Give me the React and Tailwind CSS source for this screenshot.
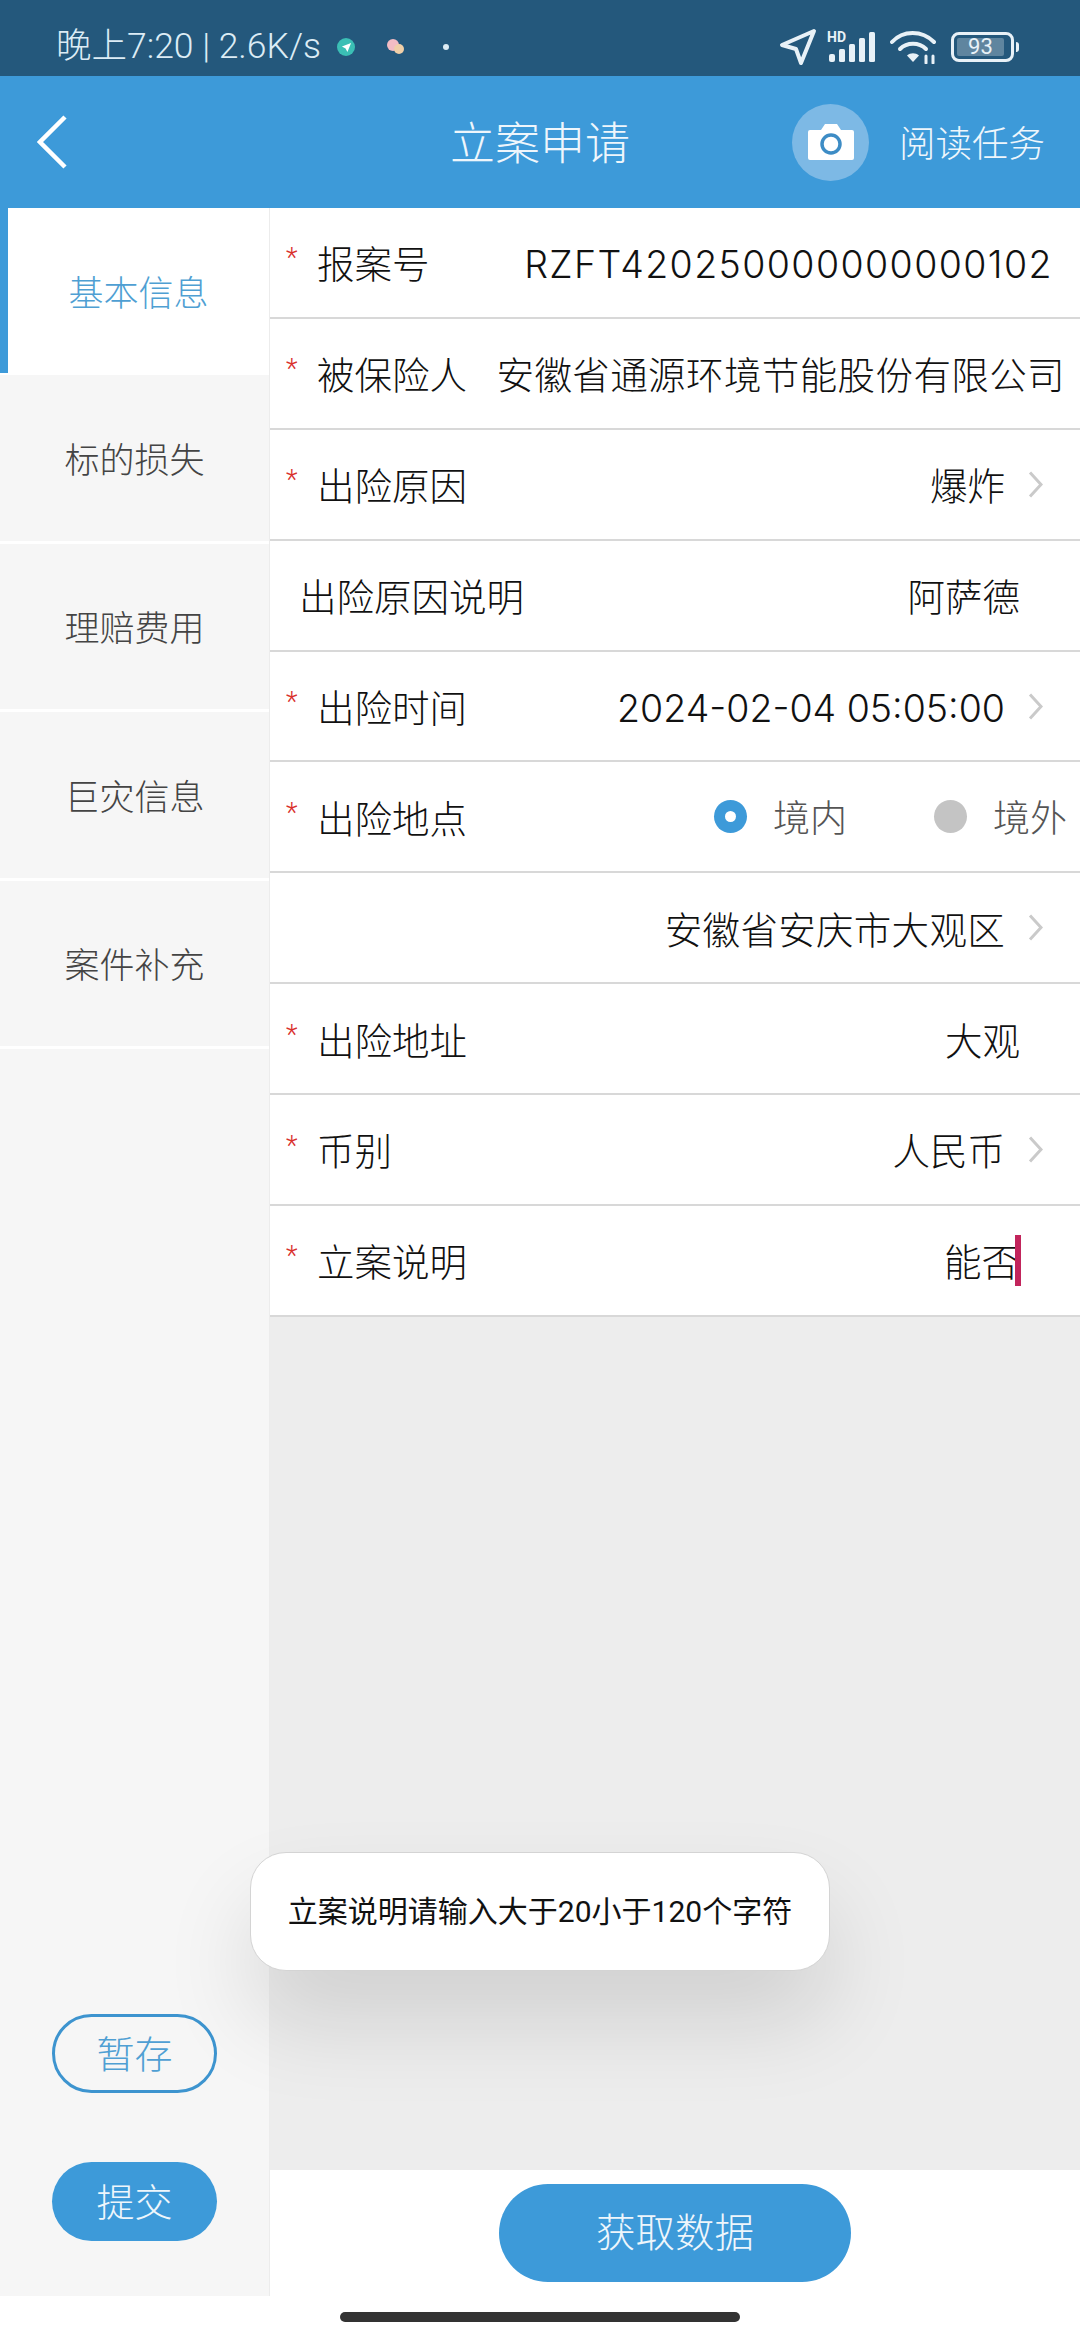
import React from 'react';

const fontStack = "font-['Roboto','Noto_Sans_CJK_SC',sans-serif]";

const tabs = ['标的损失', '理赔费用', '巨灾信息', '案件补充'];

const Arrow = () => (
  <svg className="ml-[23px] mr-[22px] shrink-0" width="15" height="27" viewBox="0 0 15 27" fill="none" stroke="#cacaca" strokeWidth="3">
    <path d="M2 1.5 13 13.5 2 25.5" />
  </svg>
);

const Row = ({ label, required = true, value, arrow, caret, textClass = '', children, valueClass = '' }) => (
  <div className="h-[110.9px] flex items-center border-b-2 border-[#d8d8d8] bg-white pr-[15px] shrink-0">
    {required ? (
      <span className="w-[47px] pl-[16px] text-[#d9302c] text-[27px] font-light leading-none -mt-[7px]">*</span>
    ) : (
      <span className="w-[29px]" />
    )}
    <span className="pt-[6px] text-[37.5px] font-light text-[#111] whitespace-nowrap">{label}</span>
    <div className={`flex-1 flex items-center justify-end ${valueClass}`}>
      {children || (
        <span className={`pt-[6px] text-[37.5px] font-light text-[#111] whitespace-nowrap ${textClass}`}>{value}</span>
      )}
      {caret && <span className="w-[6px] h-[51px] bg-[#c2255c] -ml-[4px]" />}
      {arrow && <Arrow />}
    </div>
  </div>
);

const Radio = ({ checked, label }) => (
  <div className="flex items-center gap-[26px]">
    {checked ? (
      <span className="w-[33px] h-[33px] rounded-full bg-[#3d9ad9] flex items-center justify-center">
        <span className="w-[11px] h-[11px] rounded-full bg-white" />
      </span>
    ) : (
      <span className="w-[33px] h-[33px] rounded-full bg-[#c4c4c4]" />
    )}
    <span className="pt-[6px] text-[37px] font-light text-[#555]">{label}</span>
  </div>
);

export default function App() {
  return (
    <div className={`w-[1080px] h-[2340px] bg-white flex flex-col relative overflow-hidden ${fontStack}`}>
      {/* Status bar */}
      <div className="h-[76px] bg-[#24587c] flex items-center pt-[18px] pl-[56px] pr-[61px] text-[#dcecf5] shrink-0">
        <span className="text-[35.5px] font-light whitespace-nowrap">晚上7:20 | 2.6K/s</span>
        <span className="ml-[16px] w-[18px] h-[18px] rounded-full bg-[#3bbfb5] flex items-center justify-center">
          <svg width="11" height="11" viewBox="0 0 12 12"><path d="M11 1 1 5l4 2 2 4z" fill="#fff" /></svg>
        </span>
        <svg className="ml-[31px]" width="20" height="16" viewBox="0 0 20 16">
          <circle cx="7" cy="6" r="6" fill="#f3bcc4" />
          <circle cx="13" cy="10" r="5" fill="#f0cfa8" />
        </svg>
        <span className="ml-[37px] w-[6px] h-[6px] rounded-full bg-[#dcecf5]" />
        <div className="ml-auto flex items-center">
          <svg width="38" height="38" viewBox="0 0 38 38" fill="none" stroke="#e8f1f7" strokeWidth="4" strokeLinejoin="round">
            <path d="M35 3 3 17l14 4 5 14z" />
          </svg>
          <div className="relative w-[50px] h-[32px] ml-[10px]">
            <span className="absolute left-0 -top-[1px] text-[14px] leading-none font-bold text-[#e8f1f7]">HD</span>
            <svg className="absolute inset-0" width="50" height="32" viewBox="0 0 50 32" fill="#e8f1f7">
              <rect x="2" y="23" width="6" height="8" rx="2" />
              <rect x="12" y="18" width="6" height="13" rx="1.5" />
              <rect x="22" y="13" width="6" height="18" rx="1.5" />
              <rect x="32" y="7" width="6" height="24" rx="1.5" />
              <rect x="42" y="1" width="6" height="30" rx="1.5" />
            </svg>
          </div>
          <svg className="ml-[13px]" width="47" height="34" viewBox="0 0 47 34" fill="none" stroke="#e8f1f7" strokeWidth="4" strokeLinecap="round">
            <path d="M2 12C13 0 32 0 44 12" />
            <path d="M10 19c7-7 19-7 26 0" />
            <path d="M17 25.5c3.5-3 8.5-3 12 0L23 32z" fill="#e8f1f7" stroke="none" />
            <path d="M36 26v7M43 26v7" strokeWidth="3" />
          </svg>
          <div className="ml-[14px] flex items-center">
            <div className="w-[63px] h-[30px] rounded-[8px] border-[3px] border-[#e8f1f7] p-[3px]">
              <div className="h-full w-[92%] bg-[#5f859f] rounded-[2px] flex items-center justify-center text-[22px] leading-none text-[#e8f1f7]">93</div>
            </div>
            <span className="w-[3px] h-[10px] bg-[#e8f1f7] ml-[2px] rounded-r" />
          </div>
        </div>
      </div>

      {/* Header */}
      <div className="h-[132px] bg-[#3d9ad9] flex items-center relative shrink-0 pr-[35px]">
        <svg className="ml-[37px]" width="30" height="54" viewBox="0 0 30 54" fill="none" stroke="#fff" strokeWidth="4.5">
          <path d="M28 2 3 27l25 25" />
        </svg>
        <span className="absolute left-0 right-0 pt-[6px] text-center text-[45px] font-light text-[#eef6fc]">立案申请</span>
        <div className="ml-auto flex items-center gap-[30px]">
          <div className="w-[77px] h-[77px] rounded-full bg-[#7db9e5] flex items-center justify-center">
            <svg width="48" height="38" viewBox="0 0 48 38">
              <path d="M3 7h11l4-6h12l4 6h11a2 2 0 0 1 2 2v26a2 2 0 0 1-2 2H3a2 2 0 0 1-2-2V9a2 2 0 0 1 2-2z" fill="#fff" />
              <circle cx="24" cy="21" r="9" fill="none" stroke="#3d8cc5" strokeWidth="3.5" />
            </svg>
          </div>
          <span className="pt-[6px] text-[36.5px] font-light text-[#eef6fc] whitespace-nowrap">阅读任务</span>
        </div>
      </div>

      <div className="flex flex-1 min-h-0">
        {/* Sidebar */}
        <div className="w-[270px] bg-[#f6f6f6] border-r border-[#ececec] flex flex-col shrink-0">
          <div className="h-[167px] bg-white flex shrink-0">
            <div className="w-[8px] h-[165px] bg-[#3d9ad9]" />
            <div className="flex-1 flex items-center justify-center pt-[8px] text-[35px] font-light text-[#4f9fd3]">基本信息</div>
          </div>
          {tabs.map((tab) => (
            <div
              key={tab}
              className="h-[168.5px] border-b-[3px] border-white flex items-center justify-center pt-[8px] text-[35px] font-light text-[#444] shrink-0"
            >
              {tab}
            </div>
          ))}
          <div className="mt-auto flex flex-col items-center pb-[55px] gap-[69px]">
            <div className="w-[165px] h-[79px] rounded-full border-[3px] border-[#3d94cf] flex items-center justify-center pt-[4px] text-[38px] font-light text-[#4f9fd3]">暂存</div>
            <div className="w-[165px] h-[79px] rounded-full bg-[#3d9ad9] flex items-center justify-center pt-[4px] text-[38px] font-light text-[#eef6fc]">提交</div>
          </div>
        </div>

        {/* Form */}
        <div className="flex-1 flex flex-col min-w-0">
          <Row label="报案号" value="RZFT420250000000000102" textClass="font-['Inter','Noto_Sans_CJK_SC',sans-serif] tracking-[1.4px]" valueClass="pr-[12px]" />
          <Row label="被保险人" value="安徽省通源环境节能股份有限公司" textClass="tracking-[0.4px]" />
          <Row label="出险原因" value="爆炸" arrow />
          <Row label="出险原因说明" required={false} value="阿萨德" valueClass="pr-[45px]" />
          <Row label="出险时间" value="2024-02-04 05:05:00" textClass="font-['Inter','Noto_Sans_CJK_SC',sans-serif]" arrow />
          <Row label="出险地点" valueClass="-mr-[2px]">
            <div className="flex gap-[87px]">
              <Radio checked label="境内" />
              <Radio label="境外" />
            </div>
          </Row>
          <Row label="" required={false} value="安徽省安庆市大观区" textClass="tracking-[0.3px]" arrow />
          <Row label="出险地址" value="大观" valueClass="pr-[45px]" />
          <Row label="币别" value="人民币" arrow />
          <Row label="立案说明" value="能否" caret valueClass="pr-[44px]" />
          <div className="flex-1 bg-[#ededed]" />
          <div className="h-[126px] bg-white flex items-center justify-center shrink-0">
            <div className="w-[352px] h-[98px] rounded-full bg-[#3d9ad9] flex items-center justify-center pt-[2px] text-[39.5px] font-light text-[#eef6fc]">获取数据</div>
          </div>
        </div>
      </div>

      {/* Bottom gesture bar */}
      <div className="h-[44px] bg-white flex justify-center items-start pt-[16px] shrink-0">
        <div className="w-[400px] h-[10px] rounded-full bg-[#333]" />
      </div>

      {/* Toast */}
      <div className="absolute left-[250px] top-[1852px] w-[580px] h-[119px] rounded-[36px] bg-white border border-[#d4d4d4] shadow-[0_50px_90px_rgba(0,0,0,0.12)] flex items-center justify-center text-[30px] text-[#111] whitespace-nowrap">
        立案说明请输入大于20小于120个字符
      </div>
    </div>
  );
}
